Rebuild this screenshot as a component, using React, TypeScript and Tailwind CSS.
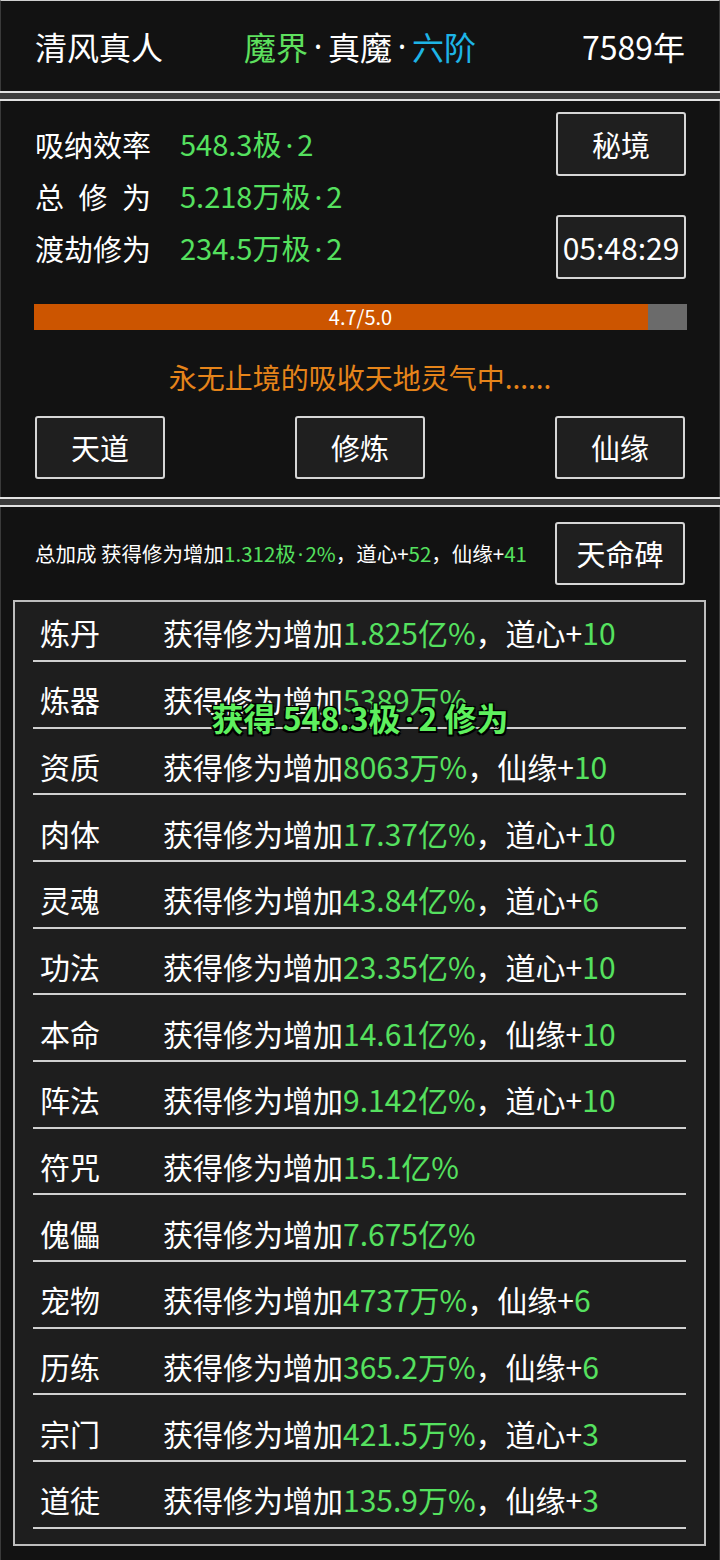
import React from "react";

const G = "text-[#55e15f]";

type Row = { name: string; val: string; extra?: [string, string] };

const rows: Row[] = [
  { name: "炼丹", val: "1.825亿%", extra: ["道心", "10"] },
  { name: "炼器", val: "5389万%" },
  { name: "资质", val: "8063万%", extra: ["仙缘", "10"] },
  { name: "肉体", val: "17.37亿%", extra: ["道心", "10"] },
  { name: "灵魂", val: "43.84亿%", extra: ["道心", "6"] },
  { name: "功法", val: "23.35亿%", extra: ["道心", "10"] },
  { name: "本命", val: "14.61亿%", extra: ["仙缘", "10"] },
  { name: "阵法", val: "9.142亿%", extra: ["道心", "10"] },
  { name: "符咒", val: "15.1亿%" },
  { name: "傀儡", val: "7.675亿%" },
  { name: "宠物", val: "4737万%", extra: ["仙缘", "6"] },
  { name: "历练", val: "365.2万%", extra: ["仙缘", "6"] },
  { name: "宗门", val: "421.5万%", extra: ["道心", "3"] },
  { name: "道徒", val: "135.9万%", extra: ["仙缘", "3"] },
];

function Dot({ cls = "px-[0.14em]" }: { cls?: string }) {
  return <span className={`font-['Noto_Sans',sans-serif] ${cls}`}>·</span>;
}

function Btn({ children, cls = "" }: { children: React.ReactNode; cls?: string }) {
  return (
    <div
      className={`w-[130px] h-[63px] shrink-0 flex items-center justify-center border-2 border-[#d6d6d6] rounded-[3px] bg-[#1f1f1f] text-white text-[29px] leading-none ${cls}`}
    >
      {children}
    </div>
  );
}

function Sep() {
  return <div className="h-[10px] shrink-0 bg-[#3c3c3c] border-y-2 border-[#e2e2e2]" />;
}

export default function App() {
  return (
    <div className="relative w-[720px] h-[1560px] overflow-hidden bg-[#121212] text-white font-['Noto_Sans_CJK_SC','Noto_Sans',sans-serif] flex flex-col">
      {/* Header */}
      <div className="h-[91px] shrink-0 border-t border-[#cfcfcf] border-x border-x-[#3a3a3a] grid grid-cols-[1fr_auto_1fr] items-center px-[34px] text-[32px] leading-none">
        <div>清风真人</div>
        <div className="flex items-center">
          <span className="text-[#5ee05e]">魔界</span>
          <Dot cls="px-[0.18em]" />
          <span>真魔</span>
          <Dot cls="px-[0.18em]" />
          <span className="text-[#1eb4e6]">六阶</span>
        </div>
        <div className="text-right">7589年</div>
      </div>
      <Sep />
      {/* Panel 2 */}
      <div className="h-[396px] shrink-0 border-x border-[#3a3a3a] flex flex-col px-[34px]">
        <div className="flex justify-between">
          <div className="flex flex-col pt-[17px] text-[29px] leading-none">
            <div className="h-[52px] flex items-center">
              <span className="w-[145px]">吸纳效率</span>
              <span className={G}>
                548.3极<Dot />2
              </span>
            </div>
            <div className="h-[52px] flex items-center">
              <span className="w-[145px]">
                <span className="w-[116px] flex justify-between">
                  <span>总</span>
                  <span>修</span>
                  <span>为</span>
                </span>
              </span>
              <span className={G}>
                5.218万极<Dot />2
              </span>
            </div>
            <div className="h-[52px] flex items-center">
              <span className="w-[145px]">渡劫修为</span>
              <span className={G}>
                234.5万极<Dot />2
              </span>
            </div>
          </div>
          <div className="flex flex-col pt-[11px] gap-[39px] -mr-[1px]">
            <Btn cls="h-[64px]">秘境</Btn>
            <Btn cls="h-[64px] text-[30px]">05:48:29</Btn>
          </div>
        </div>
        <div className="mt-[25px] h-[26px] w-[653px] -ml-[1px] bg-[#6b6b6b] relative">
          <div className="h-full bg-[#cc5500]" style={{ width: `${(4.7 / 5) * 100}%` }} />
          <div className="absolute inset-0 flex items-center justify-center text-[20px] leading-none">4.7/5.0</div>
        </div>
        <div className="mt-[27px] h-[40px] flex items-center justify-center text-[28px] leading-none text-[#e6841a]">
          永无止境的吸收天地灵气中......
        </div>
        <div className="mt-[19px] flex justify-between">
          <Btn>天道</Btn>
          <Btn>修炼</Btn>
          <Btn>仙缘</Btn>
        </div>
      </div>
      <Sep />
      {/* Panel 3 */}
      <div className="flex-1 border-x border-[#3a3a3a] flex flex-col">
        <div className="flex items-center justify-between px-[34px] pt-[15px]">
          <div className="text-[20.5px] leading-none whitespace-nowrap">
            总加成 获得修为增加
            <span className={G}>
              1.312极<Dot cls="px-[0.1em]" />2%
            </span>
            ，道心+<span className={G}>52</span>，仙缘+<span className={G}>41</span>
          </div>
          <Btn>天命碑</Btn>
        </div>
        <div className="mt-[15px] ml-[12px] w-[693px] border-2 border-[#bdbdbd] bg-[#1e1e1e] px-[18px] pb-[15px]">
          {rows.map((r, i) => (
            <div
              key={r.name}
              className={`${i === 0 ? "h-[60px] pt-[2px]" : "h-[66.67px] pt-[10px]"} border-b-2 border-[#d0d0d0] flex items-center pl-[7px] text-[30px] leading-none whitespace-nowrap`}
            >
              <span className="w-[123px]">{r.name}</span>
              <span>
                获得修为增加<span className={G}>{r.val}</span>
                {r.extra && (
                  <>
                    ，{r.extra[0]}+<span className={G}>{r.extra[1]}</span>
                  </>
                )}
              </span>
            </div>
          ))}
        </div>
      </div>
      {/* Floating text */}
      <div className="absolute left-0 right-0 top-[697px] flex justify-center pointer-events-none">
        <div className="text-[32px] font-semibold leading-[40px] text-[#5ef05e] [text-shadow:-1.5px_-1.5px_0_#000,1.5px_-1.5px_0_#000,-1.5px_1.5px_0_#000,1.5px_1.5px_0_#000,0_0_3px_#000]">
          获得 548.3极<Dot />2 修为
        </div>
      </div>
    </div>
  );
}
